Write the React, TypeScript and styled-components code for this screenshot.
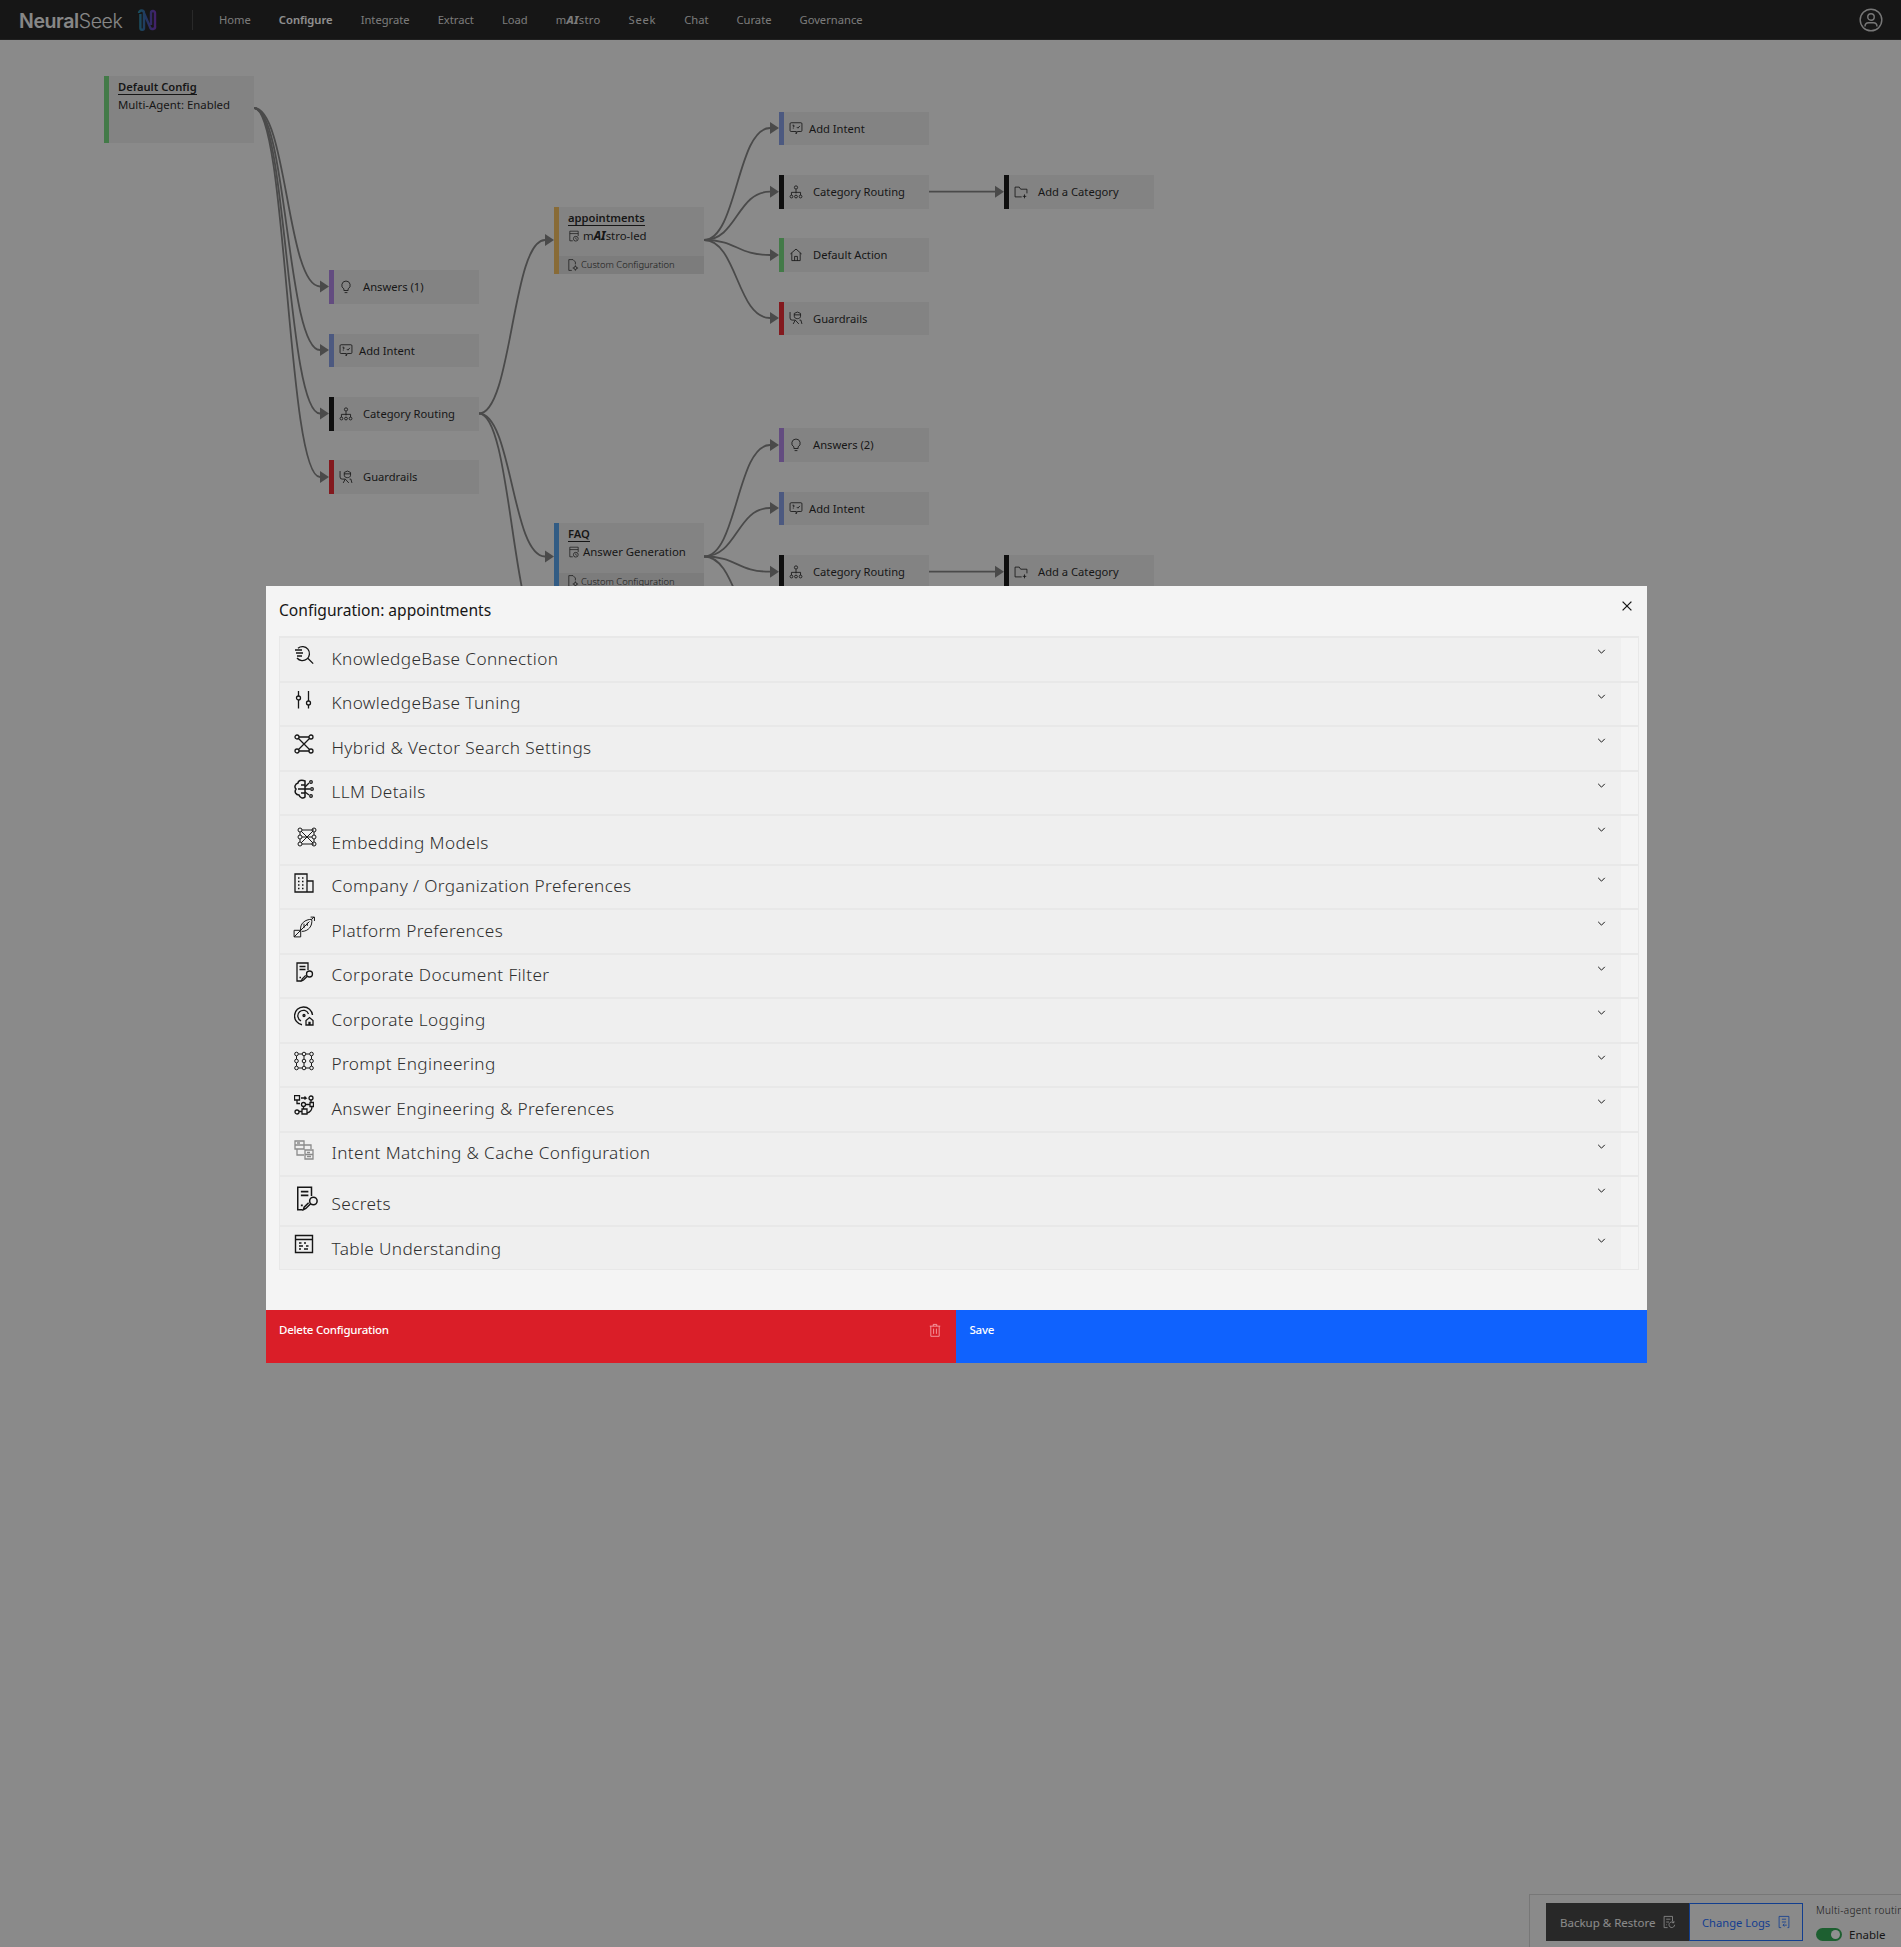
import React from "react";
import styled, { createGlobalStyle } from "styled-components";

const FONT = `"Noto Sans", "Open Sans", sans-serif`;

const GlobalStyle = createGlobalStyle`
  html, body {
    margin: 0;
    padding: 0;
    background: #f4f4f4;
    font-family: ${FONT};
    overflow: hidden;
  }
  * { box-sizing: border-box; }
`;

const Color = {
  PURPLE: "#a97ee0",
  INDIGO: "#7d96e0",
  BLACK: "#080808",
  RED: "#e61c25",
  GREEN: "#6cd575",
  ORANGE: "#f0b855",
  BLUE: "#4c9be8",
  EDGE: "#7a7a7a",
};

const Svg = styled.svg<{ $size?: number; $weight?: number }>`
  width: ${(p) => p.$size ?? 20}px;
  height: ${(p) => p.$size ?? 20}px;
  fill: none;
  stroke: currentColor;
  stroke-width: ${(p) => p.$weight ?? 1.2};
  flex: none;
  display: block;
`;

type IconProps = { size?: number; weight?: number };

const makeIcon = (body: React.ReactNode) =>
  ({ size, weight }: IconProps) => (
    <Svg viewBox="0 0 20 20" $size={size} $weight={weight}>
      {body}
    </Svg>
  );

const dot = (x: number, y: number, r = 2) => <circle cx={x} cy={y} r={r} />;

const docKey = (
  <>
    <path d="M14 8V1H3v18h4" />
    <path d="M5.500 4.500h6M5.500 7.500h6M5.500 15.500h1.500" strokeWidth={1.400} />
    <circle cx={15.500} cy={12} r={3} />
    <path d="M13.300 14.200 9.500 18l-2 1 .6-2 3.600-3.600" />
  </>
);

const KbIcon = makeIcon(
  <>
    <path d="M4 3.200A7 7 0 1 1 3 13" />
    <path d="m13.800 13.200 5.400 5.400M1 5h7M2 8h7M3 11h5" />
  </>
);
const TuningIcon = makeIcon(
  <>
    <path d="M4.500 1v5.200M4.500 10v8.500M14.500 1v10M14.500 15v3.500" />
    {dot(4.500, 8)}
    {dot(14.500, 13)}
  </>
);
const HybridIcon = makeIcon(
  <>
    <path d="M5 3h10M5 17h10M4.500 4.500l11 11M15.500 4.500l-11 11" />
    {dot(3, 3)}
    {dot(17, 3)}
    {dot(3, 17)}
    {dot(17, 17)}
  </>
);
const LlmIcon = makeIcon(
  <>
    <path d="M11 2C7 0 4 2 4 4 1 5 0 8 2 10c-2 3 0 6 3 6 1 3 4 4 6 2z" strokeWidth={1.500} />
    <path d="M11 6H7M11 10H4M11 14H7M11 8l4-4M11 10h5M11 13l4 3" />
    {dot(17, 3, 1.300)}
    {dot(18, 10, 1.300)}
    {dot(17, 17, 1.300)}
  </>
);
const EmbedIcon = makeIcon(
  <>
    <path d="M5 3h12M5 17h12M3 5v3M3 12v3M17 5v3M17 12v3M4 4l12 12M16 4 4 16M5 10h10" />
    {dot(3, 3)}
    {dot(17, 3)}
    {dot(3, 10)}
    {dot(17, 10)}
    {dot(3, 17)}
    {dot(17, 17)}
  </>
);
const CompanyIcon = makeIcon(
  <>
    <path d="M1 1h12v18H1zM13 8h6v11h-6z" />
    <path
      d="M4 5h1.500M8 5h1.500M4 8.500h1.500M8 8.500h1.500M4 12h1.500M8 12h1.500M4 15.500h1.500M8 15.500h1.500"
      strokeWidth={1.500}
    />
  </>
);
const PlatformIcon = makeIcon(
  <>
    <path d="M7 13C6 7 11 3 17 3c1 6-3 11-9 11" />
    <path d="M1 13h6v6H1zM1 19l14-14M17 3l2-2M16 1h3.500v3.500M10 7v4M13 6v3" />
  </>
);
const DocKeyIcon = makeIcon(docKey);
const LoggingIcon = makeIcon(
  <>
    <path d="M18.500 9A9 9 0 1 0 8 18.800" strokeWidth={1.400} />
    <path d="M14.500 8A5.500 5.500 0 1 0 7 14.800" />
    {dot(10, 9.500, 1)}
    <path d="M12 19v-4.500l3.500-3 3.500 3V19zM15 19v-2.500h1V19" />
  </>
);
const PromptIcon = makeIcon(
  <>
    {[3, 10, 17].map((y) => (
      <g key={y}>
        {dot(2.500, y, 1.800)}
        {dot(10, y, 1.800)}
        {dot(17.500, y, 1.800)}
      </g>
    ))}
    <path d="M4.500 3h3.500M12 3h3.500M4.500 17h3.500M12 17h3.500M2.500 5v3M10 5v3M17.500 5v3M2.500 12v3M10 12v3M17.500 12v3" />
  </>
);
const AnswerIcon = makeIcon(
  <>
    <path d="M0.500 0.500h5v4.500h-5zM3 5v3.500h3M7 3h5l-1.500-1.500M12 3l-1.500 1.500" />
    {dot(17, 3)}
    {dot(9.500, 9.500)}
    <path d="M16 7.500h3.500v4H16zM11.500 9.500H16M17 5v2.500M9.500 11.500V14M18 11.500c0 4-3 6-5 6.500" />
    {dot(3, 17)}
    <path d="M8 14h5v5H8zM5 16.500h3" />
  </>
);
const IntentIcon = makeIcon(
  <>
    <path d="M1 1h9v8H1zM1 5h9M10 5h7v4M3 9v6h7M11 10h8v9h-8zM11 14.500h8" stroke="#8a8a8a" />
    <path d="M3 3h3M13 12.500h3M13 16.500h4" stroke="#8a8a8a" />
  </>
);
const TableIcon = makeIcon(
  <>
    <path d="M1.500 1.500h17v17h-17zM1.500 5.500h17" strokeWidth={1.400} />
    <path d="M5 9h2.500M10 9h2M5 12h4M12 12h2.500M5 15h2M10 15h4" strokeWidth={1.500} />
  </>
);
const BulbIcon = makeIcon(
  <path d="M10 1.500a6 6 0 0 0-3 11.200V15h6v-2.300A6 6 0 0 0 10 1.500zM8 18h4" />
);
const ChatIcon = makeIcon(
  <>
    <path d="M3 2.500h14a1.500 1.500 0 0 1 1.500 1.500v9.500A1.500 1.500 0 0 1 17 15h-5l-2 3.500L10.500 15H3a1.500 1.500 0 0 1-1.500-1.500V4A1.500 1.500 0 0 1 3 2.500z" />
    <path d="M5 6h2v2.500H5.500M5.500 10.500h1M11 8.500l1.800 1.800L15.500 7" />
  </>
);
const OrgIcon = makeIcon(
  <>
    {dot(10, 3.500, 2.300)}
    <path d="M10 6v6M3.500 14.500V10.500h13v4" />
    {dot(3.500, 16.500)}
    {dot(10, 16.500)}
    {dot(16.500, 16.500)}
  </>
);
const GuardIcon = makeIcon(
  <>
    <path d="M1.500 1.500v8.500a3 3 0 0 0 3 3H9l-3 5.500M9 13l5 5.500" />
    <path d="M7.500 3.500 12 1.500l4.500 2v4c0 2-2 3.500-4.500 3.500S7.500 9.500 7.500 7.500zM7.500 5.500h9" />
    <path d="M15 13h2l1.500 5.500" />
  </>
);
const HouseIcon = makeIcon(
  <path d="M10 1.500 2 8.500M10 1.500l8 7M4 7v11h12V7M8 18v-6h4v6" />
);
const FolderPlusIcon = makeIcon(
  <path d="M11 17H1.500V3h6l2 3h9v6M15 13.500v5.500M12.500 16.200h5" />
);
const DocGearIcon = makeIcon(
  <>
    <path d="M8 19H3V1h7l4 4v4" />
    <circle cx={14} cy={15} r={2.500} />
    <path d="M14 10.500v2M14 17.500v2M9.500 15h2M16.500 15h2" />
  </>
);
const AgendaIcon = makeIcon(
  <>
    <path d="M8 18H3V2h14v8M3 6h14" />
    <circle cx={13} cy={14.500} r={4} />
    <path d="M13 12.500v2.200l1.500 1" />
  </>
);
const BackupIcon = makeIcon(
  <>
    <path d="M8 18H3V2h12v7M6 6h6M6 10h4M6 14h1" />
    <path d="M18 14a4 4 0 1 1-1.300-3M17 8.500V11h-2.500" />
  </>
);
const ChangeLogIcon = makeIcon(
  <>
    <path d="M6 18H3V2h14v16h-2M7 6h6M7 10h6" />
    <path d="M14 14.500H8.500M10.500 12.500l-2 2 2 2" />
  </>
);
const TrashIcon = makeIcon(
  <path d="M2.500 4.500h15M7.500 4.500V2h5v2.500M4 4.500V19h12V4.500M8 8v7.500M12 8v7.500" />
);
const CloseIcon = makeIcon(<path d="m4.500 4.500 11 11M15.500 4.500l-11 11" />);
const ChevronIcon = makeIcon(<path d="m4 7 6 6 6-6" />);
const UserIcon = makeIcon(
  <>
    <circle cx={10} cy={10} r={9} />
    <circle cx={10} cy={7.500} r={2.700} />
    <path d="M5 15.500c0-2.500 1.500-3.200 3-3.200h4c1.500 0 3 .7 3 3.200" />
  </>
);

const Logomark = () => (
  <svg width="20" height="22" viewBox="0 0 20 22" fill="none">
    <defs>
      <linearGradient id="logoGrad" x1="0" y1="0" x2="1" y2="0">
        <stop offset="0" stopColor="#1d7f9e" />
        <stop offset="0.5" stopColor="#2f4fa8" />
        <stop offset="1" stopColor="#6b2bb8" />
      </linearGradient>
    </defs>
    <path
      d="M2 4a2.500 2.500 0 0 1 5 0v15a1.800 1.800 0 0 1-3.600 0V5M7 4l6 14a2.500 2.500 0 0 0 5-1V4a2 2 0 0 0-4 0v12"
      stroke="url(#logoGrad)"
      strokeWidth="2.400"
    />
  </svg>
);

const Maistro = () => (
  <>
    m<AiMark>AI</AiMark>stro
  </>
);

// header
const Header = styled.header`
  height: 40px;
  background: #161616;
  border-bottom: 1px solid #2a2a2a;
  display: flex;
  align-items: center;
  padding-left: 19px;
  padding-right: 18px;
`;

const LogoText = styled.div`
  font-family: Inter, sans-serif;
  font-size: 19.500px;
  letter-spacing: -0.4px;
  color: #ededed;
  font-weight: 300;
  width: 118px;
  padding-top: 2px;
  b {
    font-weight: 600;
  }
`;

const HeaderRule = styled.div`
  width: 1px;
  height: 20px;
  background: #3a3a3a;
  margin-left: 35px;
  margin-right: 12px;
`;

const Nav = styled.nav`
  display: flex;
  align-items: center;
`;

const NavItem = styled.span<{ $active?: boolean; $spacing?: number }>`
  padding: 0 14px;
  font-size: 11.200px;
  white-space: nowrap;
  letter-spacing: ${(p) => p.$spacing ?? 0}px;
  color: ${(p) => (p.$active ? "#ffffff" : "#d6d6d6")};
  font-weight: ${(p) => (p.$active ? 600 : 400)};
`;

const AiMark = styled.span`
  font-weight: 800;
  font-style: italic;
`;

const HeaderUser = styled.div`
  margin-left: auto;
  color: #d0d0d0;
`;

// graph
const Canvas = styled.main`
  position: relative;
  height: 1907px;
`;

const EdgeLayer = styled.svg`
  position: absolute;
  inset: 0;
  width: 100%;
  height: 100%;
`;

const Node = styled.div<{ $x: number; $y: number; $bar: string }>`
  position: absolute;
  left: ${(p) => p.$x}px;
  top: ${(p) => p.$y - 40}px;
  width: 150px;
  background: #e7e7e7;
  border-left: 5px solid ${(p) => p.$bar};
  color: #161616;
`;

const StepNode = styled(Node)<{ $gap?: number }>`
  height: 33.500px;
  display: flex;
  align-items: center;
  gap: ${(p) => p.$gap ?? 10}px;
  padding-left: 5px;
  font-size: 11.200px;
  white-space: nowrap;
`;

const AgentNode = styled(Node)`
  height: 67px;
  display: flex;
  flex-direction: column;
  padding-top: 3px;
  font-size: 11.400px;
`;

const AgentTitle = styled.div`
  align-self: flex-start;
  margin-left: 9px;
  line-height: 15px;
  font-size: 11.200px;
  font-weight: 600;
  border-bottom: 1px solid #161616;
`;

const AgentSub = styled.div`
  margin-left: 9px;
  margin-top: 2px;
  line-height: 16px;
  display: flex;
  align-items: center;
  gap: 3px;
  white-space: nowrap;
`;

const AgentFooter = styled.div`
  margin-top: auto;
  height: 17.500px;
  background: #d8d8d8;
  padding-left: 8px;
  display: flex;
  align-items: center;
  gap: 2px;
  font-size: 9.400px;
  font-weight: 300;
  white-space: nowrap;
`;

type Step = {
  x: number;
  y: number;
  bar: string;
  label: string;
  Icon: (p: IconProps) => React.JSX.Element;
  gap?: number;
};

const steps: Step[] = [
  { x: 329, y: 270, bar: Color.PURPLE, label: "Answers (1)", Icon: BulbIcon },
  { x: 329, y: 333.500, bar: Color.INDIGO, label: "Add Intent", Icon: ChatIcon, gap: 6 },
  { x: 329, y: 397, bar: Color.BLACK, label: "Category Routing", Icon: OrgIcon },
  { x: 329, y: 460, bar: Color.RED, label: "Guardrails", Icon: GuardIcon },
  { x: 779, y: 111.500, bar: Color.INDIGO, label: "Add Intent", Icon: ChatIcon, gap: 6 },
  { x: 779, y: 175, bar: Color.BLACK, label: "Category Routing", Icon: OrgIcon },
  { x: 779, y: 238, bar: Color.GREEN, label: "Default Action", Icon: HouseIcon },
  { x: 779, y: 301.500, bar: Color.RED, label: "Guardrails", Icon: GuardIcon },
  { x: 779, y: 428, bar: Color.PURPLE, label: "Answers (2)", Icon: BulbIcon },
  { x: 779, y: 491.500, bar: Color.INDIGO, label: "Add Intent", Icon: ChatIcon, gap: 6 },
  { x: 779, y: 555, bar: Color.BLACK, label: "Category Routing", Icon: OrgIcon },
  { x: 1004, y: 175, bar: Color.BLACK, label: "Add a Category", Icon: FolderPlusIcon },
  { x: 1004, y: 555, bar: Color.BLACK, label: "Add a Category", Icon: FolderPlusIcon },
];

const links: [number, number, number, number][] = [
  [254, 108, 320, 286.500],
  [254, 108, 320, 350],
  [254, 108, 320, 413.500],
  [254, 108, 320, 477],
  [479, 413.500, 545, 240],
  [479, 413.500, 545, 556.500],
  [479, 413.500, 545, 640],
  [704, 240, 770, 128],
  [704, 240, 770, 191.700],
  [704, 240, 770, 255],
  [704, 240, 770, 318],
  [704, 556.500, 770, 445],
  [704, 556.500, 770, 508],
  [704, 556.500, 770, 571.700],
  [704, 556.500, 770, 635],
  [929, 191.700, 995, 191.700],
  [929, 571.700, 995, 571.700],
];

const Edges = () => (
  <EdgeLayer>
    <g transform="translate(0,-40)" stroke={Color.EDGE} fill="none" strokeWidth="1.800">
      {links.map(([x1, y1, x2, y2], i) => {
        const mid = (x1 + x2) / 2;
        return (
          <g key={i}>
            <path d={`M${x1} ${y1}C${mid} ${y1} ${mid} ${y2} ${x2} ${y2}`} />
            <path
              d={`M${x2} ${y2 - 6}L${x2 + 9} ${y2}L${x2} ${y2 + 6}Z`}
              fill={Color.EDGE}
              stroke="none"
            />
          </g>
        );
      })}
    </g>
  </EdgeLayer>
);

// bottom dock
const Dock = styled.div`
  position: absolute;
  right: 0;
  bottom: 0;
  width: 372px;
  height: 53px;
  border: 1px solid #d0d0d0;
  border-right: 0;
  border-bottom: 0;
  padding: 8px 0 0 16px;
  display: flex;
  overflow: hidden;
`;

const DockButton = styled.div<{ $outline?: boolean }>`
  height: 38px;
  width: ${(p) => (p.$outline ? 114 : 143)}px;
  flex: none;
  display: flex;
  align-items: center;
  padding-left: ${(p) => (p.$outline ? 12 : 14)}px;
  gap: 7px;
  font-size: ${(p) => (p.$outline ? 11.200 : 11.500)}px;
  white-space: nowrap;
  background: ${(p) => (p.$outline ? "transparent" : "#393939")};
  color: ${(p) => (p.$outline ? "#0f62fe" : "#f4f4f4")};
  border: ${(p) => (p.$outline ? "1px solid #0f62fe" : "0")};
`;

const DockToggle = styled.div`
  margin-left: 13px;
  color: #161616;
  flex: none;
`;

const ToggleCaption = styled.div`
  font-size: 10px;
  letter-spacing: 0.3px;
  white-space: nowrap;
  line-height: 14px;
  font-weight: 300;
`;

const ToggleRow = styled.div`
  display: flex;
  align-items: center;
  gap: 7px;
  margin-top: 10px;
  font-size: 11.500px;
`;

const ToggleTrack = styled.div`
  width: 26px;
  height: 13px;
  border-radius: 7px;
  background: #24a148;
  display: flex;
  justify-content: flex-end;
  align-items: center;
  padding-right: 2px;
`;

const ToggleKnob = styled.div`
  width: 9px;
  height: 9px;
  border-radius: 50%;
  background: #ffffff;
`;

// modal
const Overlay = styled.div`
  position: fixed;
  inset: 0;
  background: rgba(22, 22, 22, 0.48);
  padding: 586px 0 0 266px;
`;

const Modal = styled.section`
  width: 1381px;
  background: #f4f4f4;
  color: #161616;
  display: flex;
  flex-direction: column;
`;

const ModalHeader = styled.div`
  height: 50px;
  padding: 13px 12px 0 13px;
  display: flex;
  justify-content: space-between;
  font-size: 15.600px;
  line-height: 22px;
`;

const ModalClose = styled.div`
  margin-top: -1px;
`;

const AccordionList = styled.div`
  margin: 0 8px 40px 13px;
  border: 1px solid #e8e8e8;
  border-top: 0;
`;

const AccordionHead = styled.div`
  height: 100%;
  margin-right: 17px;
  background: #efefef;
  display: flex;
  align-items: flex-start;
`;

const IconSlot = styled.div<{ $top: number; $shift: number }>`
  width: 51.500px;
  flex: none;
  padding-left: ${(p) => 14 + p.$shift}px;
  padding-top: ${(p) => p.$top}px;
`;

const AccordionTitle = styled.div<{ $tall?: boolean }>`
  font-size: 17.200px;
  line-height: 26px;
  font-weight: 300;
  color: #2e2e2e;
  letter-spacing: 0.38px;
  padding-top: ${(p) => (p.$tall ? 14 : 7.500)}px;
`;

const AccordionRow = styled.div<{ $tall?: boolean }>`
  height: ${(p) => (p.$tall ? 49.500 : 44.500)}px;
  border-top: 2px solid #e8e8e8;

  &:last-child ${AccordionTitle} {
    padding-top: 9px;
  }
`;

const ChevronSlot = styled.div`
  margin-left: auto;
  margin-right: 14px;
  padding-top: 8px;
  color: #161616;
`;

const ModalFooter = styled.div`
  display: flex;
  height: 53px;
`;

const FooterAction = styled.div<{ $bg: string; $width: number; $pad: number }>`
  width: ${(p) => p.$width}px;
  background: ${(p) => p.$bg};
  color: #ffffff;
  padding: 11px 14px 0 ${(p) => p.$pad}px;
  font-size: 11.500px;
  font-weight: 500;
  letter-spacing: -0.25px;
  line-height: 18px;
  display: flex;
  justify-content: space-between;
  align-items: flex-start;
`;

const TrashSlot = styled.span`
  color: #f7a8ae;
  padding-top: 2px;
`;

type Section = {
  title: string;
  Icon: (p: IconProps) => React.JSX.Element;
  tall?: boolean;
  iconSize?: number;
  shift?: number;
  weight?: number;
};

const sections: Section[] = [
  { title: "KnowledgeBase Connection", Icon: KbIcon },
  { title: "KnowledgeBase Tuning", Icon: TuningIcon },
  { title: "Hybrid & Vector Search Settings", Icon: HybridIcon },
  { title: "LLM Details", Icon: LlmIcon },
  { title: "Embedding Models", Icon: EmbedIcon, tall: true, shift: 3, weight: 1 },
  { title: "Company / Organization Preferences", Icon: CompanyIcon },
  { title: "Platform Preferences", Icon: PlatformIcon, iconSize: 22, shift: -1, weight: 0.900 },
  { title: "Corporate Document Filter", Icon: DocKeyIcon },
  { title: "Corporate Logging", Icon: LoggingIcon },
  { title: "Prompt Engineering", Icon: PromptIcon, weight: 1 },
  { title: "Answer Engineering & Preferences", Icon: AnswerIcon },
  { title: "Intent Matching & Cache Configuration", Icon: IntentIcon },
  { title: "Secrets", Icon: DocKeyIcon, tall: true, iconSize: 25, weight: 1.200 },
  { title: "Table Understanding", Icon: TableIcon },
];

const navItems: { label: React.ReactNode; active?: boolean; spacing?: number }[] = [
  { label: "Home" },
  { label: "Configure", active: true },
  { label: "Integrate" },
  { label: "Extract" },
  { label: "Load" },
  { label: <Maistro />, spacing: 0.3 },
  { label: "Seek", spacing: 0.7 },
  { label: "Chat" },
  { label: "Curate" },
  { label: "Governance" },
];

export default function App() {
  return (
    <>
      <GlobalStyle />
      <Header>
        <LogoText>
          <b>Neural</b>Seek
        </LogoText>
        <Logomark />
        <HeaderRule />
        <Nav>
          {navItems.map((item, i) => (
            <NavItem key={i} $active={item.active} $spacing={item.spacing}>
              {item.label}
            </NavItem>
          ))}
        </Nav>
        <HeaderUser>
          <UserIcon size={24} />
        </HeaderUser>
      </Header>

      <Canvas>
        <Edges />

        <AgentNode $x={104} $y={76} $bar={Color.GREEN}>
          <AgentTitle>Default Config</AgentTitle>
          <AgentSub>Multi-Agent: Enabled</AgentSub>
        </AgentNode>

        <AgentNode $x={554} $y={206.500} $bar={Color.ORANGE}>
          <AgentTitle>appointments</AgentTitle>
          <AgentSub>
            <AgendaIcon size={12} />
            <span>
              <Maistro />
              -led
            </span>
          </AgentSub>
          <AgentFooter>
            <DocGearIcon size={12} />
            Custom Configuration
          </AgentFooter>
        </AgentNode>

        <AgentNode $x={554} $y={523} $bar={Color.BLUE}>
          <AgentTitle>FAQ</AgentTitle>
          <AgentSub>
            <AgendaIcon size={12} />
            Answer Generation
          </AgentSub>
          <AgentFooter>
            <DocGearIcon size={12} />
            Custom Configuration
          </AgentFooter>
        </AgentNode>

        {steps.map(({ x, y, bar, label, Icon, gap }, i) => (
          <StepNode key={i} $x={x} $y={y} $bar={bar} $gap={gap}>
            <Icon size={14} />
            {label}
          </StepNode>
        ))}
      </Canvas>

      <Dock>
        <DockButton>
          Backup &amp; Restore
          <BackupIcon size={14} />
        </DockButton>
        <DockButton $outline>
          Change Logs
          <ChangeLogIcon size={14} />
        </DockButton>
        <DockToggle>
          <ToggleCaption>Multi-agent routing</ToggleCaption>
          <ToggleRow>
            <ToggleTrack>
              <ToggleKnob />
            </ToggleTrack>
            Enable
          </ToggleRow>
        </DockToggle>
      </Dock>

      <Overlay>
        <Modal>
          <ModalHeader>
            <span>Configuration: appointments</span>
            <ModalClose>
              <CloseIcon size={16} weight={1.600} />
            </ModalClose>
          </ModalHeader>
          <AccordionList>
            {sections.map(({ title, Icon, tall, iconSize, shift, weight }) => {
              const size = iconSize ?? 20;
              return (
                <AccordionRow key={title} $tall={tall}>
                  <AccordionHead>
                    <IconSlot $top={(tall ? 23 : 19) - size / 2 - 2} $shift={shift ?? 0}>
                      <Icon size={size} weight={weight ?? 1.300} />
                    </IconSlot>
                    <AccordionTitle $tall={tall}>{title}</AccordionTitle>
                    <ChevronSlot>
                      <ChevronIcon size={11} weight={1.800} />
                    </ChevronSlot>
                  </AccordionHead>
                </AccordionRow>
              );
            })}
          </AccordionList>
          <ModalFooter>
            <FooterAction $bg="#da1e28" $width={689.500} $pad={13}>
              Delete Configuration
              <TrashSlot>
                <TrashIcon size={14} />
              </TrashSlot>
            </FooterAction>
            <FooterAction $bg="#0f62fe" $width={691.500} $pad={14}>
              Save
            </FooterAction>
          </ModalFooter>
        </Modal>
      </Overlay>
    </>
  );
}
